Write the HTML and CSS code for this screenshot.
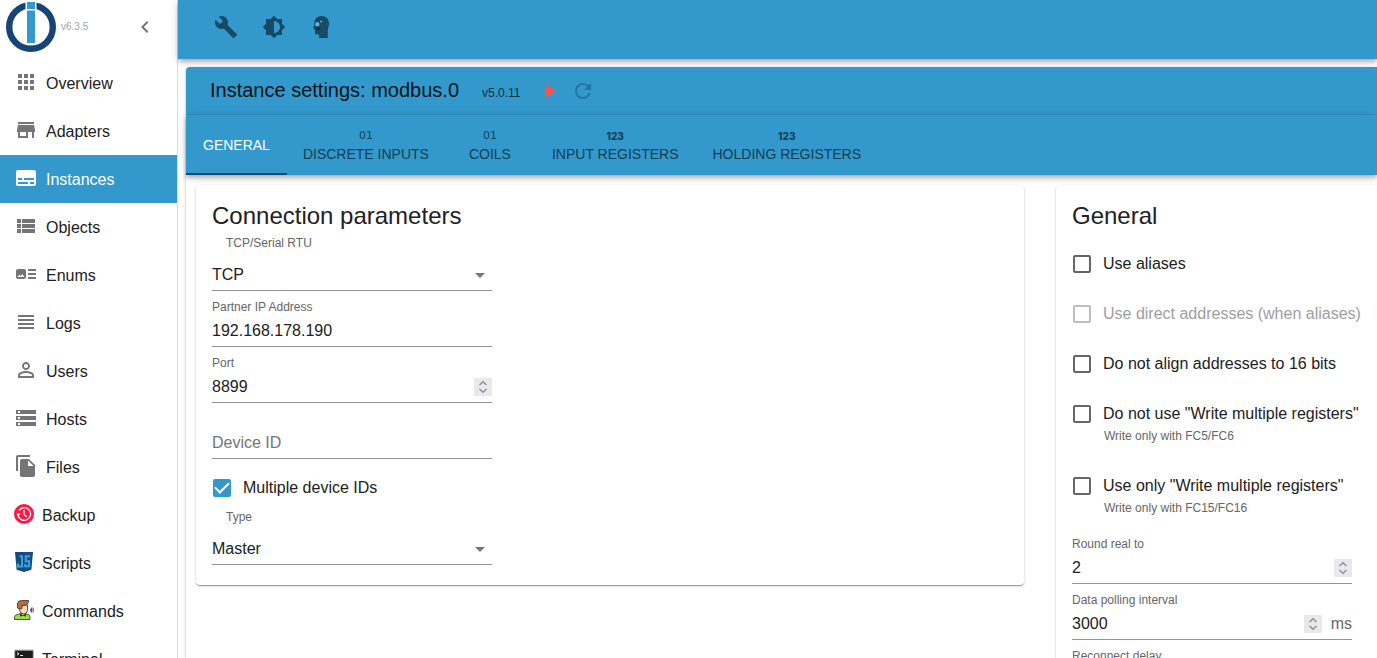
FILE: index.html
```html
<!DOCTYPE html>
<html lang="en">
<head>
<meta charset="utf-8">
<title>Instance settings: modbus.0</title>
<meta name="viewport" content="width=device-width, initial-scale=1">
<link rel="stylesheet" href="styles.css">
</head>
<body>
<aside class="sidebar">
  <header class="brand">
    <svg class="logo" viewBox="0 0 50 50" aria-hidden="true">
      <circle cx="25" cy="25" r="21.8" fill="none" stroke="#164477" stroke-width="6.4"/>
      <rect x="19.500" y="0" width="11" height="12" fill="#fff"/>
      <rect x="21" y="0" width="8" height="7" fill="#3399cc"/>
      <rect x="21" y="8.500" width="8" height="32.500" fill="#3399cc"/>
    </svg>
    <span class="brand-version">v6.3.5</span>
    <button class="icon-button collapse" type="button" aria-label="Collapse menu">
      <svg class="icon" viewBox="0 0 24 24"><path d="M15.41 7.41 14 6l-6 6 6 6 1.41-1.41L10.83 12z"/></svg>
    </button>
  </header>
  <nav class="menu">
    <a class="menu-item" href="#"><svg class="icon" viewBox="0 0 24 24"><path d="M4 8h4V4H4v4zm6 12h4v-4h-4v4zm-6 0h4v-4H4v4zm0-6h4v-4H4v4zm6 0h4v-4h-4v4zm6-10v4h4V4h-4zm-6 4h4V4h-4v4zm6 6h4v-4h-4v4zm0 6h4v-4h-4v4z"/></svg>Overview</a>
    <a class="menu-item" href="#"><svg class="icon" viewBox="0 0 24 24"><path d="M20 4H4v2h16V4zm1 10v-2l-1-5H4l-1 5v2h1v6h10v-6h4v6h2v-6h1zm-9 4H6v-4h6v4z"/></svg>Adapters</a>
    <a class="menu-item active" href="#" aria-current="page"><svg class="icon" viewBox="0 0 24 24"><path d="M20 4H4c-1.100 0-2 .9-2 2v12c0 1.100.9 2 2 2h16c1.100 0 2-.9 2-2V6c0-1.100-.9-2-2-2zM4 12h4v2H4v-2zm10 6H4v-2h10v2zm6 0h-4v-2h4v2zm0-4H10v-2h10v2z"/></svg>Instances</a>
    <a class="menu-item" href="#"><svg class="icon" viewBox="0 0 24 24"><path d="M3 14h4v-4H3v4zm0 5h4v-4H3v4zM3 9h4V5H3v4zm5 5h13v-4H8v4zm0 5h13v-4H8v4zM8 5v4h13V5H8z"/></svg>Objects</a>
    <a class="menu-item" href="#"><svg class="icon" viewBox="0 0 24 24"><path d="M22 13h-8v-2h8v2zm0-6h-8v2h8V7zm-8 10h8v-2h-8v2zm-2-8v6c0 1.100-.9 2-2 2H4c-1.100 0-2-.9-2-2V9c0-1.100.9-2 2-2h6c1.100 0 2 .9 2 2zm-1.500 6l-2.250-3-1.750 2.260-1.250-1.510L3.500 15h7z"/></svg>Enums</a>
    <a class="menu-item" href="#"><svg class="icon" viewBox="0 0 24 24"><path d="M4 15h16v-2H4v2zm0 4h16v-2H4v2zm0-8h16V9H4v2zm0-6v2h16V5H4z"/></svg>Logs</a>
    <a class="menu-item" href="#"><svg class="icon" viewBox="0 0 24 24"><path d="M12 5.900c1.160 0 2.100.94 2.100 2.100s-.94 2.100-2.100 2.100S9.900 9.160 9.900 8s.94-2.100 2.100-2.100m0 9c2.970 0 6.100 1.460 6.100 2.100v1.100H5.900V17c0-.64 3.130-2.100 6.100-2.100M12 4C9.790 4 8 5.790 8 8s1.790 4 4 4 4-1.790 4-4-1.790-4-4-4zm0 9c-2.670 0-8 1.340-8 4v3h16v-3c0-2.660-5.330-4-8-4z"/></svg>Users</a>
    <a class="menu-item" href="#"><svg class="icon" viewBox="0 0 24 24"><path d="M2 20h20v-4H2v4zm2-3h2v2H4v-2zM2 4v4h20V4H2zm4 3H4V5h2v2zm-4 7h20v-4H2v4zm2-3h2v2H4v-2z"/></svg>Hosts</a>
    <a class="menu-item" href="#"><svg class="icon" viewBox="0 0 24 24"><path d="M16 1H4c-1.100 0-2 .9-2 2v14h2V3h12V1zm-1 4l6 6v10c0 1.100-.9 2-2 2H7.990C6.890 23 6 22.100 6 21l.01-14c0-1.100.89-2 1.990-2h7zm-1 7h5.500L14 6.500V12z"/></svg>Files</a>
    <a class="menu-item" href="#">
      <svg class="app-icon" viewBox="0 0 20 20"><circle cx="10" cy="10" r="10" fill="#ff1744"/><path d="M4 11a6.300 6.300 0 1 0 1-4.500" fill="none" stroke="#fff" stroke-width="1.300"/><path d="M2.300 9.600h4L4.200 12.400z" fill="#fff"/><path d="M10 6v4.500l2.600 2.300" fill="none" stroke="#fff" stroke-width="1.200"/></svg>Backup</a>
    <a class="menu-item" href="#">
      <svg class="app-icon" viewBox="0 0 20 20"><path d="M1 0h18l-1.600 17.700L10 20l-7.400-2.300z" fill="#144a7c"/><path d="M10 1.500h7.400L16 16.600l-6 1.900z" fill="#174f84"/><path d="M4 11.500v3h4V4.300H5.500M16 4.300h-4.200v4.900h3.400v5h-4V12" fill="none" stroke="#36a3dc" stroke-width="2"/></svg>Scripts</a>
    <a class="menu-item" href="#">
      <svg class="app-icon" viewBox="0 0 20 20"><path d="M.5 19.500v-2.500q0-2 3-2.500l3-1h5l2.500 1q2 .5 2 2.500v2.500z" fill="#9fdc4e" stroke="#26331b" stroke-width=".8"/><path d="M6 13.500l3 2 3-2v3l-3-.8-3 .8z" fill="#26331b"/><path d="M5.500 5h8v5.500q-.5 3.500-4 3.500-3.500-.5-4-4z" fill="#f8d9b5" stroke="#3b2b22" stroke-width=".8"/><path d="M3.500 8V4q0-3.500 4-3.500h7l-.5 3q-1.500 2.200-6 2v3l-2.500.5z" fill="#b3703c" stroke="#3b2b22" stroke-width=".8"/><path d="M16.500 9.500l1.500-2v5l-1.500-1.500zM19.400 8v4" fill="#555" stroke="#555" stroke-width=".8"/></svg>Commands</a>
    <a class="menu-item" href="#">
      <svg class="app-icon" viewBox="0 0 20 20"><rect y="1.500" width="20" height="17" rx="1" fill="#b9b9b9"/><rect x="1.200" y="2.700" width="17.600" height="14.600" fill="#1b1b1b"/><path d="M3 4.500l2 1.300-2 1.300M6 7.500h3" fill="none" stroke="#fff" stroke-width=".9"/></svg>Terminal</a>
  </nav>
</aside>
<div class="page">
  <header class="app-bar">
    <button class="icon-button" type="button" aria-label="System settings"><svg class="icon" viewBox="0 0 24 24"><path d="M22.700 19l-9.100-9.100c.9-2.300.4-5-1.500-6.900-2-2-5-2.400-7.400-1.300L9 6 6 9 1.600 4.700C.4 7.100.9 10.100 2.900 12.100c1.900 1.900 4.600 2.400 6.900 1.500l9.100 9.100c.4.400 1 .4 1.400 0l2.300-2.300c.5-.4.5-1.100.1-1.400z"/></svg></button>
    <button class="icon-button" type="button" aria-label="Change color theme"><svg class="icon" viewBox="0 0 24 24"><path d="M20 15.310L23.310 12 20 8.690V4h-4.690L12 .69 8.690 4H4v4.690L.69 12 4 15.310V20h4.690L12 23.310 15.310 20H20v-4.690zM12 18V6c3.310 0 6 2.690 6 6s-2.690 6-6 6z"/></svg></button>
    <button class="icon-button" type="button" aria-label="Expert mode"><svg class="icon" viewBox="0 0 24 24"><path d="M11.500 1c4.500 0 7.500 3 7.500 7.500 0 3-1.200 4.600-1.200 7V23H9v-3.500H6.500q-1.500 0-1.500-1.500v-2.500L3.300 13l1-3.500C4.300 4.500 6.500 1 11.500 1z"/><circle cx="7.300" cy="9.300" r="2.200" fill="#5fb0da"/><circle cx="11.200" cy="6.500" r="1.100" fill="#5fb0da"/><circle cx="8" cy="13.600" r="1.400" fill="#10222d"/></svg></button>
  </header>
  <main class="instance">
    <div class="title-bar">
      <h1 class="title">Instance settings: modbus.0</h1>
      <span class="version">v5.0.11</span>
      <div class="title-actions">
        <button class="icon-button run" type="button" aria-label="Start instance"><svg class="icon" viewBox="0 0 24 24"><path d="M8 5v14l11-7z"/></svg></button>
        <button class="icon-button reload" type="button" aria-label="Restart instance" disabled><svg class="icon" viewBox="0 0 24 24"><path d="M17.650 6.350C16.200 4.900 14.210 4 12 4c-4.420 0-7.990 3.580-7.990 8s3.570 8 7.990 8c3.730 0 6.840-2.550 7.730-6h-2.080c-.82 2.330-3.040 4-5.650 4-3.310 0-6-2.690-6-6s2.690-6 6-6c1.660 0 3.140.69 4.220 1.780L13 11h7V4l-2.350 2.350z"/></svg></button>
      </div>
    </div>
    <div class="tabs" role="tablist">
      <button class="tab wide selected" type="button" role="tab" aria-selected="true">GENERAL</button>
      <button class="tab" type="button" role="tab"><span class="tab-mark bits">01</span>DISCRETE INPUTS</button>
      <button class="tab" type="button" role="tab"><span class="tab-mark bits">01</span>COILS</button>
      <button class="tab wide" type="button" role="tab"><span class="tab-mark numbers">123</span>INPUT REGISTERS</button>
      <button class="tab wide" type="button" role="tab"><span class="tab-mark numbers">123</span>HOLDING REGISTERS</button>
    </div>
    <div class="panels">
      <section class="card connection">
        <h2 class="card-title">Connection parameters</h2>
        <div class="field select-field">
          <label class="field-label" for="transport">TCP/Serial RTU</label>
          <div class="control"><select class="input" id="transport"><option>TCP</option></select><span class="caret"></span></div>
        </div>
        <div class="field">
          <label class="field-label" for="address">Partner IP Address</label>
          <div class="control"><input class="input" id="address" type="text" value="192.168.178.190"></div>
        </div>
        <div class="field">
          <label class="field-label" for="port">Port</label>
          <div class="control"><input class="input" id="port" type="number" value="8899"><svg class="spinner" viewBox="0 0 18 18"><path d="M5.500 7L9 3.800 12.500 7M5.500 11L9 14.200 12.500 11"/></svg></div>
        </div>
        <div class="field">
          <div class="field-label"></div>
          <div class="control"><input class="input" id="device" type="text" placeholder="Device ID" aria-label="Device ID"></div>
        </div>
        <div class="check spaced">
          <label class="check-row"><input class="box" type="checkbox" checked>Multiple device IDs</label>
        </div>
        <div class="field select-field">
          <label class="field-label" for="type">Type</label>
          <div class="control"><select class="input" id="type"><option>Master</option></select><span class="caret"></span></div>
        </div>
      </section>
      <section class="card general">
        <h2 class="card-title">General</h2>
        <div class="checks">
          <div class="check"><label class="check-row"><input class="box" type="checkbox">Use aliases</label></div>
          <div class="check"><label class="check-row off"><input class="box" type="checkbox" disabled>Use direct addresses (when aliases)</label></div>
          <div class="check"><label class="check-row"><input class="box" type="checkbox">Do not align addresses to 16 bits</label></div>
          <div class="check"><label class="check-row"><input class="box" type="checkbox" aria-describedby="fc6">Do not use "Write multiple registers"</label><p class="hint" id="fc6">Write only with FC5/FC6</p></div>
          <div class="check"><label class="check-row"><input class="box" type="checkbox" aria-describedby="fc16">Use only "Write multiple registers"</label><p class="hint" id="fc16">Write only with FC15/FC16</p></div>
        </div>
        <div class="field">
          <label class="field-label" for="round">Round real to</label>
          <div class="control"><input class="input" id="round" type="number" value="2"><svg class="spinner" viewBox="0 0 18 18"><path d="M5.500 7L9 3.800 12.500 7M5.500 11L9 14.200 12.500 11"/></svg></div>
        </div>
        <div class="field">
          <label class="field-label" for="poll">Data polling interval</label>
          <div class="control"><input class="input" id="poll" type="number" value="3000"><svg class="spinner" viewBox="0 0 18 18"><path d="M5.500 7L9 3.800 12.500 7M5.500 11L9 14.200 12.500 11"/></svg><span class="unit">ms</span></div>
        </div>
        <div class="field">
          <label class="field-label" for="reconnect">Reconnect delay</label>
          <div class="control"><input class="input" id="reconnect" type="number"></div>
        </div>
      </section>
    </div>
  </main>
</div>
</body>
</html>
```
FILE: styles.css
```css
* { box-sizing: border-box; }

body {
  margin: 0;
  height: 100vh;
  display: flex;
  overflow: hidden;
  background: #fff;
  color: #212121;
  font: 16px/24px "Liberation Sans", Arial, sans-serif;
}

.icon { display: block; width: 24px; height: 24px; fill: currentColor; flex: none; }

.icon-button {
  padding: 0;
  border: 0;
  background: none;
  color: inherit;
}

.sidebar {
  flex: none;
  width: 178px;
  border-right: 1px solid #dcdcdc;
  overflow: hidden;
}

.brand {
  display: flex;
  align-items: center;
  height: 59px;
  padding: 0 20px 5px 6px;
}

.logo { width: 50px; height: 50px; flex: none; }

.brand-version { margin-left: 5px; font-size: 10px; color: #a3a3a3; }

.collapse { margin-left: auto; color: #757575; }

.menu-item {
  display: flex;
  align-items: center;
  height: 48px;
  padding: 2px 0 0 14px;
  color: #212121;
  text-decoration: none;
}

.menu-item .icon { margin: 0 8px 4px 0; color: #757575; }
.menu-item.active { background: #3399cc; color: #fff; }
.menu-item.active .icon { color: #fff; }

.app-icon { width: 20px; height: 20px; margin: 0 8px 4px 0; flex: none; }

.page { flex: 1; min-width: 0; display: flex; flex-direction: column; }

.app-bar {
  flex: none;
  display: flex;
  align-items: center;
  gap: 24px;
  height: 59px;
  padding: 0 36px 5px;
  background: #3399cc;
  color: #174a64;
  box-shadow: 0 2px 4px -1px rgba(0, 0, 0, .2), 0 4px 5px rgba(0, 0, 0, .14), 0 1px 10px rgba(0, 0, 0, .12);
}

.instance {
  flex: 1;
  min-height: 0;
  margin: 8px 0 0 8px;
  border-radius: 4px 0 0 0;
  background: #fff;
  box-shadow: 0 2px 2px -1px rgba(0, 0, 0, .2), 0 1px 3px rgba(0, 0, 0, .3);
}

.title-bar {
  display: flex;
  align-items: center;
  height: 48px;
  padding: 0 24px;
  border-radius: 4px 0 0 0;
  border-bottom: 1px solid #3193c4;
  background: #3399cc;
  color: #071318;
}

.title { margin: 0 0 2px; font-size: 20px; font-weight: 400; line-height: 28px; }
.version { margin: 4px 16px 0 23px; font-size: 12px; line-height: 16px; color: #0b2c3c; }
.title-actions { display: flex; gap: 10px; }
.run { color: #f9524a; }
.reload { color: #26759d; }

.tabs {
  display: flex;
  height: 60px;
  background: #3399cc;
  box-shadow: 0 2px 4px -1px rgba(0, 0, 0, .2), 0 4px 5px rgba(0, 0, 0, .14), 0 1px 10px rgba(0, 0, 0, .12);
}

.tab {
  display: flex;
  flex-direction: column;
  align-items: center;
  justify-content: center;
  min-width: 90px;
  padding: 2px 16px 0;
  border: 0;
  border-bottom: 2px solid transparent;
  background: none;
  color: #143d52;
  font: 14px/18px "Liberation Sans", Arial, sans-serif;
  white-space: nowrap;
}

.tab.wide { padding: 2px 17px 0; }
.tab.selected { border-color: #164477; color: #fff; }
.tab-mark { line-height: 18px; }
.bits { font-family: "DejaVu Sans", sans-serif; font-size: 11px; -webkit-text-stroke: 0; }
.numbers { font-family: Inter, sans-serif; font-size: 10px; font-weight: 800; }

.panels { display: flex; align-items: flex-start; gap: 32px; padding: 10px 0 0 10px; }

.card {
  padding: 16px 16px 20px;
  border-radius: 4px;
  background: #fff;
  box-shadow: 0 2px 1px -1px rgba(0, 0, 0, .2), 0 1px 1px rgba(0, 0, 0, .14), 0 1px 3px rgba(0, 0, 0, .2);
}

.connection { flex: 1; }
.general { flex: none; width: 321px; padding-right: 8px; border-radius: 4px 0 0 4px; }

.card-title { margin: 0; font-size: 24px; font-weight: 400; line-height: 30px; }

.field { width: 280px; padding-top: 8px; }
.field-label { display: block; height: 16px; font-size: 12px; line-height: 16px; color: #666; }
.select-field { padding-top: 4px; }
.select-field .field-label { margin: 0 0 9px 14px; }

.control { display: flex; align-items: center; height: 32px; border-bottom: 1px solid #949494; }
.select-field .control { height: 31px; }

.input {
  flex: 1;
  min-width: 0;
  height: 30px;
  padding: 0;
  border: 0;
  outline: 0;
  background: none;
  color: #212121;
  font: inherit;
  appearance: none;
  -moz-appearance: textfield;
}

.input::-webkit-inner-spin-button { appearance: none; margin: 0; }
.input::placeholder { color: #757575; opacity: 1; }

.caret { margin-right: 7px; border: 5px solid transparent; border-top-color: #757575; border-bottom: 0; }

.spinner { width: 18px; height: 18px; background: #e9e9ed; fill: none; stroke: #8f8f9d; stroke-width: 1.5; }
.unit { margin-left: 9px; color: #666; }

.checks { padding-top: 8px; }
.check { padding: 11px 0; }
.check.spaced { padding: 15px 0 3px; }
.check-row { display: flex; align-items: center; gap: 12px; height: 28px; white-space: nowrap; }
.check-row.off { color: #9e9e9e; }

.box {
  appearance: none;
  display: grid;
  place-items: center;
  flex: none;
  width: 18px;
  height: 18px;
  margin: 0 0 0 1px;
  border: 2px solid #666;
  border-radius: 2px;
}

.box:disabled { border-color: #bdbdbd; }
.box:checked { border-color: #3399cc; background: #3399cc; }
.box:checked::after {
  content: "";
  width: 12px;
  height: 6px;
  margin-bottom: 4px;
  border: solid #fff;
  border-width: 0 0 2px 2px;
  transform: rotate(-45deg);
}

.hint { margin: 0 0 6px 32px; font-size: 12px; line-height: 16px; color: #666; }
.check:last-child .hint { margin-bottom: 1px; }
```
